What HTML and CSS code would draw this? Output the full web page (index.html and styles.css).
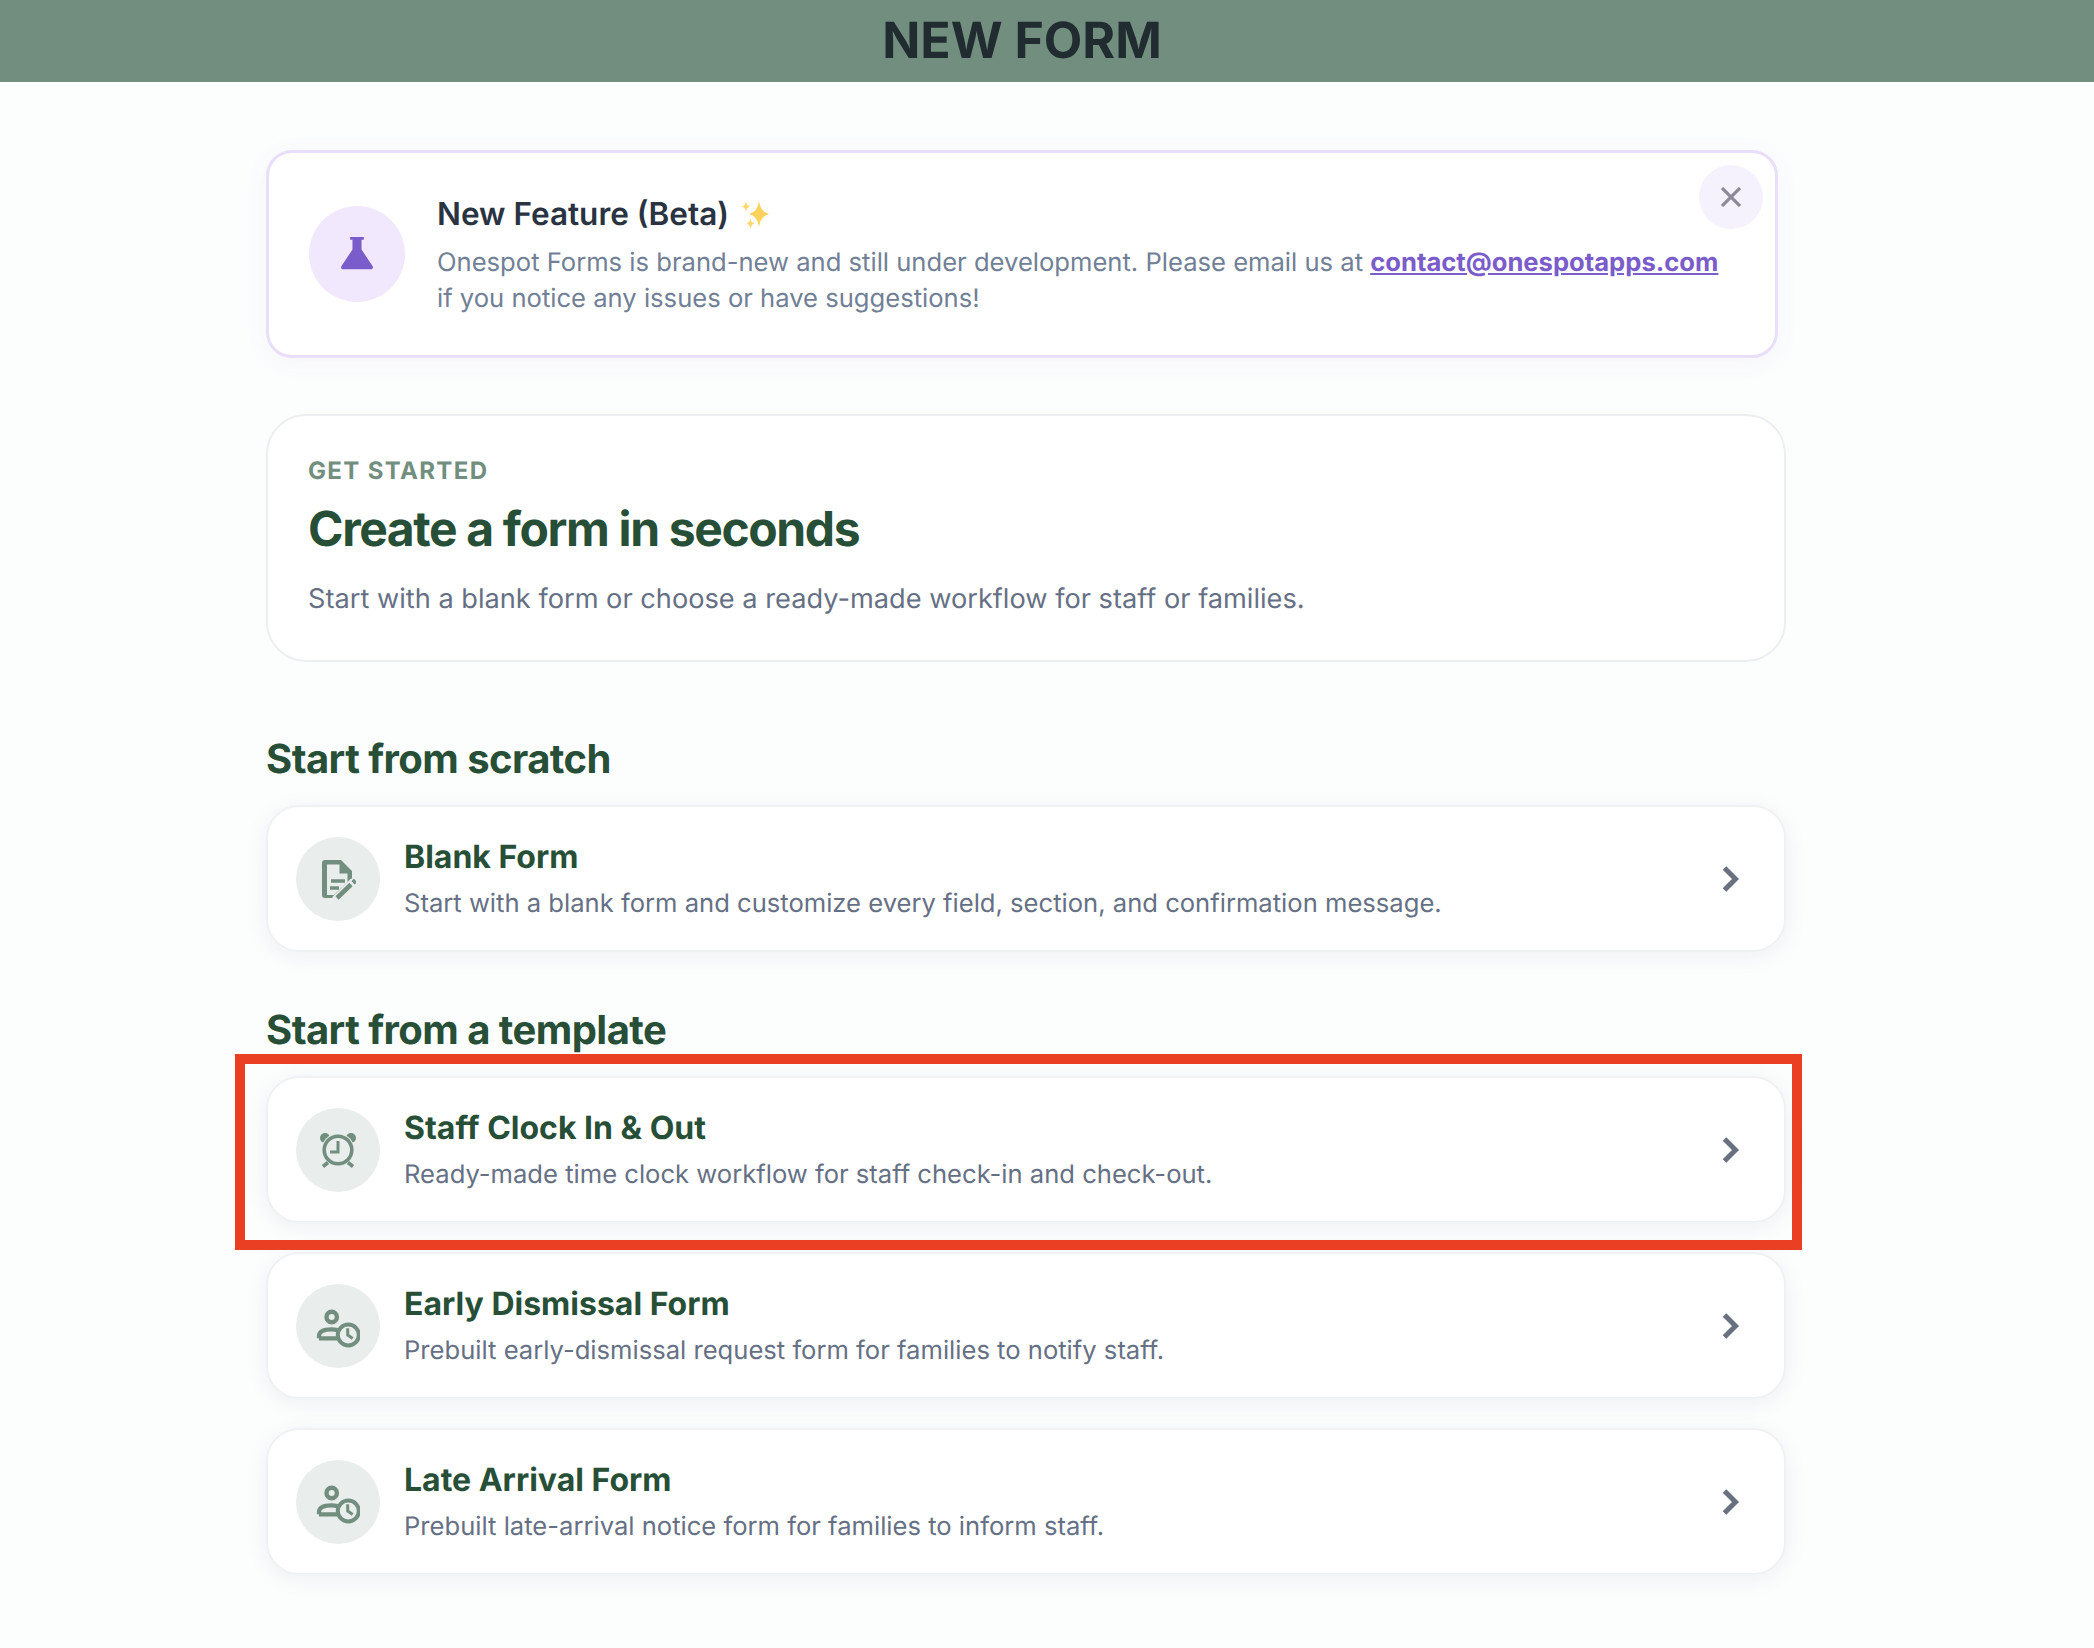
FILE: index.html
```html
<!DOCTYPE html>
<html lang="en">
<head>
    <meta charset="UTF-8">
    <meta name="viewport" content="width=device-width, initial-scale=1.0">
    <title>New Form</title>
    <link rel="stylesheet" href="styles.css">
</head>
<body>
    <header class="top-bar">
        <h1>NEW FORM</h1>
    </header>

    <main class="container">
        <div class="beta-card">
            <div class="beta-icon">
                <svg width="38" height="38" viewBox="0 0 36 36"><path fill="#7a5ccb" d="M11.5 2h13v2.6h-2.2v9.2l10.4 15.6c.9 1.5.2 3.1-1.6 3.1H4.900c-1.800 0-2.500-1.600-1.600-3.100l10.400-15.600V4.600h-2.200z"/></svg>
            </div>
            <div class="beta-text">
                <h3>New Feature (Beta) <svg class="sparkle" width="30" height="30" viewBox="0 0 30 30"><path fill="#fcd25a" d="M18 1Q19.500 12 28 14 19.500 16 18 27 16.500 16 8 14 16.500 12 18 1z"/><path fill="#fbd76e" d="M5 1Q5.600 5.700 9 6.500 5.600 7.300 5 12 4.400 7.300 1 6.500 4.400 5.700 5 1zM9.500 18Q10.100 22.700 13.500 23.500 10.100 24.300 9.500 29 8.900 24.300 5.500 23.500 8.900 22.700 9.500 18z"/></svg></h3>
                <p>Onespot Forms is brand-new and still under development. Please email us at <a href="#">contact@onespotapps.com</a><br>if you notice any issues or have suggestions!</p>
            </div>
            <button class="close-btn">
                <svg width="20" height="20" viewBox="0 0 20 20"><path d="M1 1l18 18M19 1L1 19" stroke="#8b8a96" stroke-width="3.200" fill="none"/></svg>
            </button>
        </div>

        <section class="hero-card">
            <div class="eyebrow">GET STARTED</div>
            <h2>Create a form in seconds</h2>
            <p>Start with a blank form or choose a ready-made workflow for staff or families.</p>
        </section>

        <h2 class="section-title">Start from scratch</h2>
        <div class="option-card">
            <div class="option-icon">
                <svg width="36" height="42" viewBox="0 0 36 42">
                    <path fill="#728e7f" fill-rule="evenodd" d="M5 2H21L32 13V24L16 40H5a3 3 0 0 1-3-3V5a3 3 0 0 1 3-3zM7 6.500V37H14L27.500 24V15.500H19.500V6.500z"/>
                    <path fill="#728e7f" d="M11 21.300h14v3.400H11zM10 28.300h9v3.400h-9z"/>
                    <path d="M15 42L34 23" stroke="#e9edeb" stroke-width="8" fill="none"/>
                    <path d="M17 40L31 26.500M33 24.800L35.500 22.500" stroke="#728e7f" stroke-width="4.600" fill="none"/>
                </svg>
            </div>
            <div class="option-text">
                <h3>Blank Form</h3>
                <p>Start with a blank form and customize every field, section, and confirmation message.</p>
            </div>
            <svg class="chevron" width="18" height="28" viewBox="0 0 18 28"><path d="M2.500 3L13.500 14 2.500 25" stroke="#69707f" stroke-width="5" fill="none"/></svg>
        </div>

        <h2 class="section-title template-title">Start from a template</h2>
        <div class="option-card">
            <div class="option-icon">
                <svg width="38" height="36" viewBox="0 0 38 36">
                    <circle cx="6" cy="6" r="5" fill="#728e7f"/>
                    <circle cx="32" cy="6" r="5" fill="#728e7f"/>
                    <circle cx="19" cy="18" r="16.500" fill="#e9edeb"/>
                    <circle cx="19" cy="18" r="13.800" fill="none" stroke="#728e7f" stroke-width="3.600"/>
                    <path d="M19 9V20H11" fill="none" stroke="#728e7f" stroke-width="3"/>
                    <path d="M4 34.500L9 30.500M34 34.500L29 30.500" stroke="#728e7f" stroke-width="3.600" fill="none"/>
                </svg>
            </div>
            <div class="option-text">
                <h3>Staff Clock In &amp; Out</h3>
                <p>Ready-made time clock workflow for staff check-in and check-out.</p>
            </div>
            <svg class="chevron" width="18" height="28" viewBox="0 0 18 28"><path d="M2.500 3L13.500 14 2.500 25" stroke="#69707f" stroke-width="5" fill="none"/></svg>
        </div>
        <div class="option-card">
            <div class="option-icon">
                <svg width="44" height="44" viewBox="0 0 44 44">
                    <circle cx="15.700" cy="13" r="5.200" fill="none" stroke="#728e7f" stroke-width="4.400"/>
                    <path d="M3 34.300V32C3 27 9 25.300 15.500 25.300c2 0 4 .3 6 .8M3 34.300H22" fill="none" stroke="#728e7f" stroke-width="4.200"/>
                    <circle cx="32.300" cy="31" r="10.500" fill="#e9edeb" stroke="#728e7f" stroke-width="4"/>
                    <path d="M31.700 24.300V31L36.700 34.500" fill="none" stroke="#728e7f" stroke-width="3"/>
                </svg>
            </div>
            <div class="option-text">
                <h3>Early Dismissal Form</h3>
                <p>Prebuilt early-dismissal request form for families to notify staff.</p>
            </div>
            <svg class="chevron" width="18" height="28" viewBox="0 0 18 28"><path d="M2.500 3L13.500 14 2.500 25" stroke="#69707f" stroke-width="5" fill="none"/></svg>
        </div>
        <div class="option-card">
            <div class="option-icon">
                <svg width="44" height="44" viewBox="0 0 44 44">
                    <circle cx="15.700" cy="13" r="5.200" fill="none" stroke="#728e7f" stroke-width="4.400"/>
                    <path d="M3 34.300V32C3 27 9 25.300 15.500 25.300c2 0 4 .3 6 .8M3 34.300H22" fill="none" stroke="#728e7f" stroke-width="4.200"/>
                    <circle cx="32.300" cy="31" r="10.500" fill="#e9edeb" stroke="#728e7f" stroke-width="4"/>
                    <path d="M31.700 24.300V31L36.700 34.500" fill="none" stroke="#728e7f" stroke-width="3"/>
                </svg>
            </div>
            <div class="option-text">
                <h3>Late Arrival Form</h3>
                <p>Prebuilt late-arrival notice form for families to inform staff.</p>
            </div>
            <svg class="chevron" width="18" height="28" viewBox="0 0 18 28"><path d="M2.500 3L13.500 14 2.500 25" stroke="#69707f" stroke-width="5" fill="none"/></svg>
        </div>
    </main>

    <div class="highlight-box"></div>
</body>
</html>
```

FILE: styles.css
```css
* {
    box-sizing: border-box;
}
body {
    font-family: Inter, "Liberation Sans", sans-serif;
    background: #fcfdfd;
    margin: 0;
    min-height: 1648px;
    position: relative;
    text-rendering: geometricPrecision;
}
h1, h2, h3, p {
    margin: 0;
}
.top-bar {
    height: 82px;
    background: #728e7f;
    display: flex;
    align-items: center;
    justify-content: center;
    padding-right: 50px;
}
.top-bar h1 {
    font-size: 50px;
    font-weight: 700;
    color: #202c30;
    line-height: 1;
}
.container {
    width: 1520px;
    margin-left: 266px;
    padding-top: 68px;
}
.beta-card {
    width: 1512px;
    height: 208px;
    background: #fff;
    border: 3px solid #e9dffb;
    border-radius: 26px;
    box-shadow: 0 4px 24px rgba(120,90,200,0.05);
    padding: 0 40px;
    display: flex;
    align-items: center;
    gap: 32px;
    position: relative;
}
.beta-icon {
    flex: 0 0 96px;
    height: 96px;
    border-radius: 50%;
    background: #f1e8fd;
    display: flex;
    align-items: center;
    justify-content: center;
}
.beta-text h3 {
    font-size: 31.5px;
    font-weight: 600;
    color: #2a3342;
    line-height: 44px;
    margin-bottom: 9px;
}
.sparkle {
    vertical-align: -5px;
    margin-left: 4px;
}
.beta-text p {
    font-size: 25.6px;
    line-height: 36px;
    color: #718096;
}
.beta-text a {
    color: #7a5ccb;
    font-weight: 700;
}
.close-btn {
    position: absolute;
    top: 12px;
    right: 12px;
    width: 64px;
    height: 64px;
    border: 0;
    border-radius: 50%;
    background: #f5f1fd;
    display: flex;
    align-items: center;
    justify-content: center;
    padding: 0;
}
.hero-card {
    margin-top: 56px;
    height: 248px;
    background: #fff;
    border: 2px solid #eceef1;
    border-radius: 40px;
    padding: 39px 40px 0;
}
.eyebrow {
    font-size: 24px;
    font-weight: 700;
    letter-spacing: 1.35px;
    color: #728e7f;
    line-height: 32px;
}
.hero-card h2 {
    font-size: 48px;
    font-weight: 700;
    letter-spacing: -1.37px;
    color: #274f37;
    line-height: 60px;
    margin-top: 12px;
}
.hero-card p {
    font-size: 27.2px;
    line-height: 40px;
    color: #667085;
    margin-top: 20px;
}
.section-title {
    font-size: 40px;
    font-weight: 700;
    letter-spacing: -0.55px;
    color: #274f37;
    line-height: 50px;
    margin-top: 72px;
    margin-bottom: 21px;
}
.template-title {
    margin-top: 53px;
}
.option-card {
    height: 147px;
    background: #fff;
    border: 2px solid #f0f1f3;
    border-radius: 33px;
    box-shadow: 0 4px 24px rgba(30,40,60,0.06);
    padding: 0 44px 0 28px;
    margin-bottom: 29px;
    display: flex;
    align-items: center;
    gap: 24px;
}
.option-icon {
    flex: 0 0 84px;
    height: 84px;
    border-radius: 50%;
    background: #e9edeb;
    display: flex;
    align-items: center;
    justify-content: center;
}
.option-text {
    flex: 1;
}
.option-text h3 {
    font-size: 32px;
    font-weight: 700;
    color: #274f37;
    line-height: 42px;
    margin-bottom: 8px;
}
.option-text p {
    font-size: 25.6px;
    line-height: 36px;
    color: #667085;
}
.chevron {
    flex: none;
}
.highlight-box {
    position: absolute;
    left: 235px;
    top: 1054px;
    width: 1567px;
    height: 196px;
    border: 10px solid #eb3f24;
}
```
